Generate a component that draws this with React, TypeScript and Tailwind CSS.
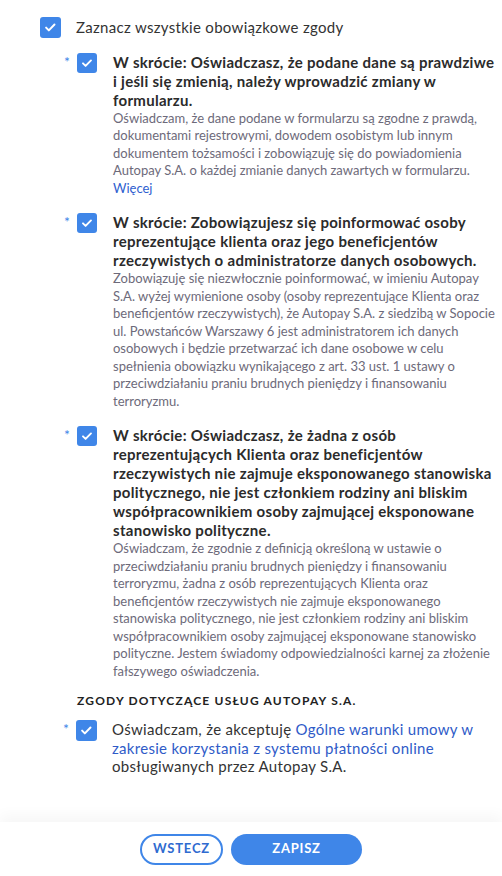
import React from 'react'

function Check({ size = 20 }: { size?: number }) {
  return (
    <div
      className="shrink-0 rounded-[3px] bg-[#3f86e8] flex items-center justify-center"
      style={{ width: size, height: size }}
    >
      <svg width={size * 0.6} height={size * 0.6} viewBox="0 0 12 12" fill="none">
        <path d="M2 6.3l2.6 2.6L10 3.4" stroke="white" strokeWidth="1.9" strokeLinecap="round" strokeLinejoin="round" />
      </svg>
    </div>
  )
}

function Marker({ size = 20 }: { size?: number }) {
  return (
    <div className="w-[57px] shrink-0 flex justify-end">
      <span className="text-[#3f86e8] text-[14px] leading-[14px] mr-[7px] mt-[2px]">*</span>
      <Check size={size} />
    </div>
  )
}

function Consent({ title, desc, more }: { title: string; desc: string; more?: boolean }) {
  return (
    <div className="flex">
      <Marker />
      <div className="ml-[16px] pr-[3px]">
        <div className="text-[15px] leading-[19px] font-bold tracking-[0.3px] text-[#2b2b2b]">
          W skrócie: {title}
        </div>
        <p className="text-[13px] leading-[17.5px] text-[#6d6a7a]">
          {desc}
          {more && (
            <>
              <br />
              <span className="text-[#2f5fd0]">Więcej</span>
            </>
          )}
        </p>
      </div>
    </div>
  )
}

export default function App() {
  return (
    <div className="h-[876px] flex flex-col bg-white" style={{ fontFamily: 'Lato, "Noto Sans", sans-serif' }}>
      <div className="flex-1 pl-[40px] pt-[16px]">
        <div className="flex items-center gap-[15px]">
          <Check size={21} />
          <span className="text-[15px] tracking-[0.3px] text-[#333]">Zaznacz wszystkie obowiązkowe zgody</span>
        </div>

        <div className="mt-[14px] flex flex-col gap-[16px]">
          <Consent
            title="Oświadczasz, że podane dane są prawdziwe i jeśli się zmienią, należy wprowadzić zmiany w formularzu."
            desc="Oświadczam, że dane podane w formularzu są zgodne z prawdą, dokumentami rejestrowymi, dowodem osobistym lub innym dokumentem tożsamości i zobowiązuję się do powiadomienia Autopay S.A. o każdej zmianie danych zawartych w formularzu."
            more
          />
          <Consent
            title="Zobowiązujesz się poinformować osoby reprezentujące klienta oraz jego beneficjentów rzeczywistych o administratorze danych osobowych."
            desc="Zobowiązuję się niezwłocznie poinformować, w imieniu Autopay S.A. wyżej wymienione osoby (osoby reprezentujące Klienta oraz beneficjentów rzeczywistych), że Autopay S.A. z siedzibą w Sopocie ul. Powstańców Warszawy 6 jest administratorem ich danych osobowych i będzie przetwarzać ich dane osobowe w celu spełnienia obowiązku wynikającego z art. 33 ust. 1 ustawy o przeciwdziałaniu praniu brudnych pieniędzy i finansowaniu terroryzmu."
          />
          <Consent
            title="Oświadczasz, że żadna z osób reprezentujących Klienta oraz beneficjentów rzeczywistych nie zajmuje eksponowanego stanowiska politycznego, nie jest członkiem rodziny ani bliskim współpracownikiem osoby zajmującej eksponowane stanowisko polityczne."
            desc="Oświadczam, że zgodnie z definicją określoną w ustawie o przeciwdziałaniu praniu brudnych pieniędzy i finansowaniu terroryzmu, żadna z osób reprezentujących Klienta oraz beneficjentów rzeczywistych nie zajmuje eksponowanego stanowiska politycznego, nie jest członkiem rodziny ani bliskim współpracownikiem osoby zajmującej eksponowane stanowisko polityczne. Jestem świadomy odpowiedzialności karnej za złożenie fałszywego oświadczenia."
          />
        </div>

        <h3 className="mt-[13px] ml-[37px] text-[12px] leading-[16px] font-bold tracking-[0.1em] text-[#222]">
          ZGODY DOTYCZĄCE USŁUG AUTOPAY S.A.
        </h3>

        <div className="mt-[11px] flex">
          <Marker size={21} />
          <p className="ml-[15px] pr-[4px] text-[15px] leading-[18.5px] tracking-[0.3px] text-[#333]">
            Oświadczam, że akceptuję{' '}
            <span className="text-[#2f5bc8]">Ogólne warunki umowy w zakresie korzystania z systemu płatności online</span>{' '}
            obsługiwanych przez Autopay S.A.
          </p>
        </div>
      </div>

      <div className="h-[54px] shrink-0 flex items-center justify-center gap-[8px] shadow-[0_-6px_14px_rgba(0,0,0,0.04)]">
        <button className="w-[83px] h-[31px] rounded-full border-2 border-[#3f86e8] text-[#2f6bd0] text-[13px] font-bold tracking-[0.06em]">
          WSTECZ
        </button>
        <button className="w-[131px] h-[31px] rounded-full bg-[#3f86e8] text-white text-[13px] font-bold tracking-[0.06em]">
          ZAPISZ
        </button>
      </div>
    </div>
  )
}
